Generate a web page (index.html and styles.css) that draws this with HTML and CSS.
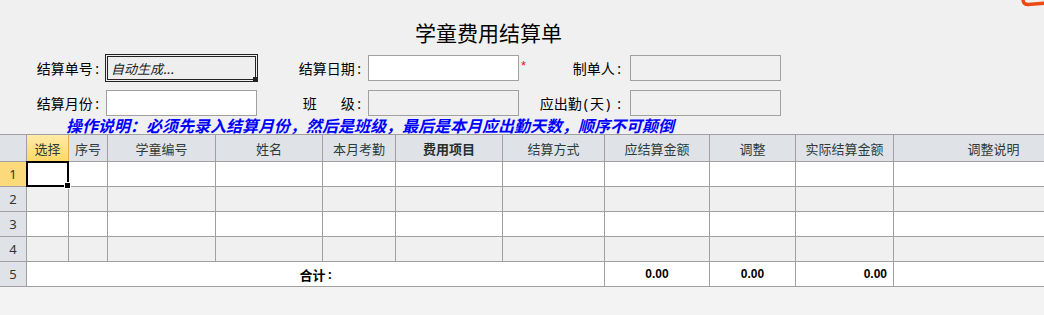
FILE: index.html
```html
<!DOCTYPE html>
<html lang="zh-CN">
<head>
<meta charset="utf-8">
<title>学童费用结算单</title>
<link rel="stylesheet" href="styles.css">
</head>
<body>
<div class="page">
  <div class="top">
    <svg class="logo" width="24" height="8" viewBox="0 0 24 8"><path d="M3 0 Q 3.5 4.5 8 4.5 L 24 3.3" fill="none" stroke="#ee4b14" stroke-width="3.4" stroke-linecap="round"/></svg>
    <h1 class="title">学童费用结算单</h1>
    <div class="form">
      <div class="frow">
        <label class="lbl">结算单号<span class="c">:</span></label>
        <div class="inp focus"><span class="ph">自动生成...</span><i class="handle"></i></div>
        <label class="lbl">结算日期<span class="c">:</span></label>
        <div class="inp white"></div>
        <label class="lbl lbl-star wide"><span class="star">*</span><span>制单人<span class="c">:</span></span></label>
        <div class="inp"></div>
      </div>
      <div class="frow">
        <label class="lbl">结算月份<span class="c">:</span></label>
        <div class="inp white"></div>
        <label class="lbl"><span class="ban">班</span>级<span class="c">:</span></label>
        <div class="inp"></div>
        <label class="lbl wide">应出勤<span class="p">(</span>天<span class="p">)</span><span class="c far">:</span></label>
        <div class="inp"></div>
      </div>
    </div>
    <div class="note">操作说明：必须先录入结算月份，然后是班级，最后是本月应出勤天数，顺序不可颠倒</div>
  </div>
  <div class="table">
    <div class="tr thead">
      <div class="cell num"></div>
      <div class="cell sel-h">选择</div>
      <div class="cell">序号</div>
      <div class="cell">学童编号</div>
      <div class="cell">姓名</div>
      <div class="cell">本月考勤</div>
      <div class="cell bold">费用项目</div>
      <div class="cell">结算方式</div>
      <div class="cell">应结算金额</div>
      <div class="cell">调整</div>
      <div class="cell">实际结算金额</div>
      <div class="cell">调整说明</div>
    </div>
    <div class="tr odd">
      <div class="cell num num-sel">1</div>
      <div class="cell active"><i class="cell-handle"></i></div>
      <div class="cell"></div><div class="cell"></div><div class="cell"></div><div class="cell"></div><div class="cell"></div><div class="cell"></div><div class="cell"></div><div class="cell"></div><div class="cell"></div><div class="cell"></div>
    </div>
    <div class="tr even">
      <div class="cell num">2</div>
      <div class="cell"></div><div class="cell"></div><div class="cell"></div><div class="cell"></div><div class="cell"></div><div class="cell"></div><div class="cell"></div><div class="cell"></div><div class="cell"></div><div class="cell"></div><div class="cell"></div>
    </div>
    <div class="tr odd">
      <div class="cell num">3</div>
      <div class="cell"></div><div class="cell"></div><div class="cell"></div><div class="cell"></div><div class="cell"></div><div class="cell"></div><div class="cell"></div><div class="cell"></div><div class="cell"></div><div class="cell"></div><div class="cell"></div>
    </div>
    <div class="tr even">
      <div class="cell num">4</div>
      <div class="cell"></div><div class="cell"></div><div class="cell"></div><div class="cell"></div><div class="cell"></div><div class="cell"></div><div class="cell"></div><div class="cell"></div><div class="cell"></div><div class="cell"></div><div class="cell"></div>
    </div>
    <div class="tr odd">
      <div class="cell num">5</div>
      <div class="cell total-lbl">合计<span class="c">:</span></div>
      <div class="cell amt">0.00</div>
      <div class="cell amt">0.00</div>
      <div class="cell amt right">0.00</div>
      <div class="cell"></div>
    </div>
  </div>
</div>
</body>
</html>
```

FILE: styles.css
```css
html, body {
  margin: 0;
  padding: 0;
  background: #f3f3f3;
}
body {
  font-family: "Noto Sans CJK SC", "Noto Sans", sans-serif;
  font-size: 13px;
  color: #000;
}
.page {
  width: 1044px;
  height: 315px;
  overflow: hidden;
}
.top {
  position: relative;
  background: #f0f0f0;
}
.logo {
  position: absolute;
  top: 0;
  right: 0;
}
.title {
  margin: 0;
  height: 54px;
  box-sizing: border-box;
  padding-top: 19px;
  width: 977px;
  text-align: center;
  font-size: 21px;
  line-height: 26px;
  font-weight: normal;
}
.form {
  display: flex;
  flex-direction: column;
  gap: 7px;
}
.frow {
  display: grid;
  grid-template-columns: 106px 151px 111px 151px 111px 151px;
  height: 28px;
  align-items: center;
}
.lbl {
  text-align: right;
  padding-right: 7px;
  line-height: 26px;
  white-space: nowrap;
  font-size: 14px;
}
.lbl.wide {
  padding-right: 9px;
}
.c {
  font-family: "Noto Sans", sans-serif;
  margin-left: 2.5px;
}
.c.far {
  margin-left: 5px;
}
.p {
  font-family: "Noto Sans", sans-serif;
  margin: 0 2px;
}
.lbl-star {
  display: flex;
  justify-content: space-between;
  padding-left: 2px;
}
.star {
  color: #e8102a;
  font-family: "Liberation Sans", sans-serif;
  font-size: 13px;
  line-height: 22px;
}
.ban {
  margin-right: 24px;
}
.inp {
  height: 26px;
  box-sizing: border-box;
  border: 1px solid #a0a0a0;
  background: #f0f0f0;
}
.inp.white {
  background: #fff;
}
.inp.focus {
  position: relative;
  height: 28px;
  margin-left: -1px;
  margin-right: -1px;
  border: 3px double #222;
  background: #eeeeee;
  display: flex;
  align-items: center;
  padding-left: 3px;
}
.ph {
  font-style: italic;
  color: #222;
  font-size: 13px;
}
.handle {
  position: absolute;
  right: -3px;
  bottom: -3px;
  width: 5px;
  height: 5px;
  background: #222;
}
.note {
  height: 17px;
  line-height: 17px;
  padding-left: 66px;
  color: #0000ff;
  font-weight: bold;
  font-style: italic;
  font-size: 16px;
  white-space: nowrap;
}
.table {
  border-top: 1px solid #a0a0a0;
  width: 1044px;
  overflow: hidden;
  background: #fff;
}
.tr {
  display: grid;
  grid-template-columns: 27px 42px 39px 108px 107px 73px 107px 102px 105px 86px 98px 200px;
  width: 1094px;
}
.cell {
  box-sizing: border-box;
  height: 25px;
  border-right: 1px solid #a0a0a0;
  border-bottom: 1px solid #a0a0a0;
  display: flex;
  align-items: center;
  justify-content: center;
  white-space: nowrap;
}
.thead .cell {
  height: 27px;
  background: #dfe3e8;
  color: #2e3b3b;
}
.thead .bold {
  font-weight: bold;
  color: #233030;
}
.thead .sel-h {
  background: linear-gradient(#ffeba8, #ffd964);
  border-right-color: #e2b04a;
  border-bottom-color: #e2b04a;
}
.odd .cell {
  background: #fff;
}
.even .cell {
  background: #f0f0f0;
}
.tr .num {
  background: #dfe3e8;
  color: #333;
  font-family: "Noto Sans", sans-serif;
  font-size: 13px;
}
.tr .num-sel {
  background: #fcd97a;
  border-right-color: #e2b04a;
}
.active {
  position: relative;
  border: 2px solid #000;
  margin-left: -1px;
  margin-top: -1px;
  height: 26px;
  width: 43px;
  z-index: 2;
}
.cell-handle {
  position: absolute;
  right: -4px;
  bottom: -4px;
  width: 5px;
  height: 5px;
  background: #000;
  border: 1px solid #fff;
}
.total-lbl {
  grid-column: span 7;
  font-weight: bold;
}
.amt {
  font-family: "Liberation Sans", sans-serif;
  font-weight: bold;
  font-size: 12px;
}
.amt.right {
  justify-content: flex-end;
  padding-right: 6px;
}
```
